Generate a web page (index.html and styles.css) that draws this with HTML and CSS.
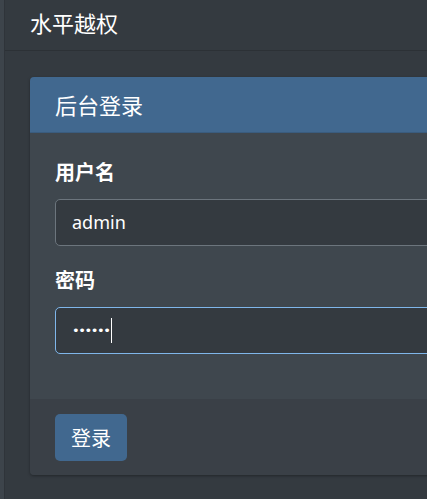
FILE: index.html
```html
<!DOCTYPE html>
<html lang="zh">
<head>
<meta charset="utf-8">
<title>水平越权</title>
<link rel="stylesheet" href="styles.css">
</head>
<body>
<div class="layout">
  <div class="sidebar"></div>
  <div class="main">
    <header class="topbar"><h1 class="title">水平越权</h1></header>
    <div class="content">
      <div class="card">
        <div class="card-header">后台登录</div>
        <div class="card-body">
          <div class="form-group">
            <label class="label">用户名</label>
            <div class="input"><span class="value">admin</span></div>
          </div>
          <div class="form-group">
            <label class="label">密码</label>
            <div class="input focus"><span class="dots">••••••</span><span class="caret"></span></div>
          </div>
        </div>
        <div class="card-footer">
          <button class="btn">登录</button>
        </div>
      </div>
    </div>
  </div>
</div>
</body>
</html>
```
FILE: styles.css
```css
html, body {
  margin: 0;
  padding: 0;
  height: 100%;
  overflow: hidden;
}
body {
  background: #343a40;
  color: #fff;
  font-family: "Noto Sans", "Noto Sans CJK SC", sans-serif;
}
.layout {
  display: flex;
  height: 100%;
}
.sidebar {
  width: 4px;
  flex: none;
  background: #3d444b;
  border-right: 1px solid #2f343a;
}
.main {
  flex: 1;
  min-width: 0;
}
.topbar {
  height: 50px;
  border-bottom: 1px solid #2c3136;
  display: flex;
  align-items: center;
  padding-left: 25px;
}
.title {
  margin: 0;
  font-size: 22px;
  font-weight: 400;
  line-height: 1;
  padding-bottom: 4px;
}
.content {
  padding: 26px 0 0 25px;
}
.card {
  width: 520px;
  border-radius: 4px;
  overflow: hidden;
  box-shadow: 0 1px 3px rgba(0,0,0,0.35);
}
.card-header {
  background: #41688f;
  height: 55px;
  border-bottom: 1px solid #3a5c7e;
  display: flex;
  align-items: center;
  padding-left: 25px;
  font-size: 22px;
  line-height: 1;
}
.card-body {
  background: #3f474e;
  padding: 25px 25px 25px;
}
.form-group {
  margin-bottom: 20px;
}
.label {
  display: block;
  font-size: 20px;
  font-weight: 700;
  line-height: 30px;
  margin-bottom: 11px;
}
.input {
  height: 45px;
  box-sizing: content-box;
  border: 1px solid #6c757d;
  border-radius: 5px;
  background: #343a40;
  display: flex;
  align-items: center;
  padding: 0 16px;
  font-size: 18px;
}
.input.focus {
  border-color: #7fb6ea;
}
.value {
  line-height: 1;
  padding-bottom: 2px;
}
.dots {
  font-family: "DejaVu Sans", sans-serif;
  font-size: 13px;
  letter-spacing: -1.4px;
  line-height: 1;
}
.caret {
  width: 1px;
  height: 25px;
  background: #fff;
  margin-left: 1px;
}
.card-footer {
  background: #3a4047;
  padding: 15px 25px 14px;
}
.btn {
  display: block;
  height: 47px;
  padding: 0 16px;
  border: none;
  border-radius: 5px;
  background: #41688f;
  color: #fff;
  font-family: "Noto Sans CJK SC", sans-serif;
  font-size: 20px;
  line-height: 1;
}
```
